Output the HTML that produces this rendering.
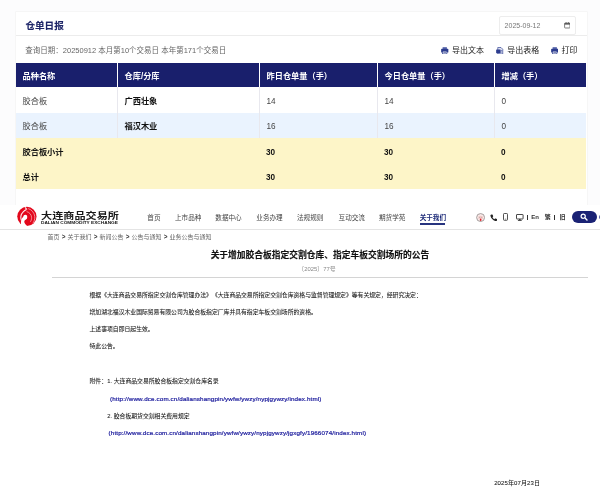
<!DOCTYPE html>
<html lang="zh-CN">
<head>
<meta charset="utf-8">
<title>仓单日报</title>
<style>
html,body{margin:0;padding:0;}
body{width:600px;height:500px;overflow:hidden;background:#fff;position:relative;font-family:"Liberation Sans","Noto Sans CJK SC",sans-serif;color:#333;text-spacing-trim:space-all;}
#wrap{position:absolute;left:0;top:0;width:600px;height:500px;will-change:transform;opacity:0.999;}
.abs{position:absolute;white-space:nowrap;line-height:1;}
#top{position:absolute;left:0;top:0;width:600px;height:205px;background:#fcfcfd;}
#panel{position:absolute;left:16px;top:12px;width:571px;height:193px;background:#fff;box-shadow:0 0 0 0.6px #f2f2f2;}
#ttl{left:25.4px;top:20.6px;font-size:9.6px;-webkit-text-stroke:0.12px #1d2568;font-weight:bold;color:#1d2568;}
#hr1{position:absolute;left:16px;top:35.4px;width:571px;height:1px;background:#ececec;}
#q{left:25.3px;top:46.6px;font-size:7.5px;color:#666;}
#date{position:absolute;left:499.2px;top:16.2px;width:76.6px;height:18.4px;border:1px solid #ededed;border-radius:2px;box-sizing:border-box;background:#fff;}
#datet{left:504.6px;top:21.9px;font-size:7px;color:#777;}
.tool{font-size:8px;color:#222;top:46.6px;}
table{position:absolute;left:16px;top:63.25px;width:570.4px;border-collapse:collapse;table-layout:fixed;font-size:8.2px;}
td,th{vertical-align:top;padding:8px 0 0 6.5px;text-align:left;box-sizing:border-box;border-left:1px solid #e8e8ee;font-weight:normal;color:#444;line-height:10px;}
th{background:#191f6c;color:#fff;font-weight:bold;height:24px;border-left:1px solid #fff;padding-top:8.25px;}
th:first-child,td:first-child{border-left:none;}
tr.r1 td{height:25.85px;padding-top:9.35px;}
tr.r2 td{background:#eaf3fe;height:25.2px;padding-top:9.1px;}
tr.s td{background:#fdf5c8;font-weight:bold;color:#111;border-left:none;height:25.45px;padding-top:9.7px;}
tr.t td{padding-top:9.5px;}
td.b{font-weight:bold;color:#111;}

#bot{position:absolute;left:0;top:205px;width:600px;height:295px;background:#fff;}
#nl{position:absolute;left:0;top:228.5px;width:600px;height:1px;background:#e4e4e4;}
.nav{font-size:6.6px;color:#444;top:214.6px;}
#nav8{font-weight:bold;color:#1c2a78;}
#nu{position:absolute;left:419.8px;top:223px;width:25.6px;height:1.5px;background:#27347f;}
#lg1{left:40.6px;top:211.7px;font-size:8.6px;font-weight:700;color:#1a1a1a;transform-origin:0 0;transform:scaleX(1.295);letter-spacing:0;}
#lg2{left:40.8px;top:221.5px;font-size:3.4px;font-weight:bold;color:#111;letter-spacing:0;transform-origin:0 0;transform:scaleX(1.4);}
#bc{left:47.5px;top:234.3px;font-size:6px;color:#666;}
#bc b{color:#333;font-weight:bold;display:inline-block;width:8px;text-align:center;font-size:6.4px;}
#h1{left:0;width:640px;text-align:center;top:251.4px;font-size:8.75px;font-weight:bold;color:#111;-webkit-text-stroke:0.15px #111;}
#no{left:0;width:634px;text-align:center;top:267.4px;font-size:5.9px;color:#888;}
#hr2{position:absolute;left:51.6px;top:276.9px;width:536.4px;height:1px;background:#d4d4d4;}
.p{font-size:5.84px;color:#151515;left:89.5px;-webkit-text-stroke:0.06px #151515;}
.u{color:#2424a0 !important;font-size:6.25px;letter-spacing:0.13px;-webkit-text-stroke:0.22px #2424a0;}
.rt{font-size:6.2px;color:#333;top:213.8px;font-weight:bold;}
</style>
</head>
<body>
<div id="wrap">
<div id="top">
  <div id="panel"></div>
  <div id="ttl" class="abs">仓单日报</div>
  <div id="hr1"></div>
  <div id="q" class="abs">查询日期：20250912 本月第10个交易日 本年第171个交易日</div>
  <div id="date"></div>
  <div id="datet" class="abs">2025-09-12</div>
  <svg class="abs" style="left:563.7px;top:22.4px" width="6.6" height="6.6" viewBox="0 0 13.2 13.2"><rect x="1.2" y="2.2" width="10.8" height="9.8" rx="1.2" fill="#fff" stroke="#555" stroke-width="1.5"/><rect x="1.2" y="2.2" width="10.8" height="3" fill="#555"/><rect x="3.4" y="0.4" width="1.5" height="2.6" fill="#555"/><rect x="8.3" y="0.4" width="1.5" height="2.6" fill="#555"/></svg>
  <svg class="abs" style="left:441px;top:47.2px" width="7.5" height="7" viewBox="0 0 15 14"><rect x="3.2" y="0.3" width="8.6" height="4.2" fill="#5a68ad"/><rect x="0.3" y="3.6" width="14.4" height="7.6" rx="1.4" fill="#2c3c8e"/><rect x="3.2" y="8.4" width="8.6" height="5.3" fill="#fff" stroke="#2c3c8e" stroke-width="1.2"/><rect x="4.6" y="10.4" width="5.8" height="1.2" fill="#2c3c8e"/></svg>
  <svg class="abs" style="left:496px;top:46.9px" width="7.5" height="7.5" viewBox="0 0 15 15"><path d="M3.5,1 H10 L13.5,4.5 V14 H3.5 Z" fill="#dfe3f3" stroke="#2c3c8e" stroke-width="1.3"/><rect x="0.3" y="5" width="9" height="7.4" rx="0.8" fill="#2c3c8e"/><rect x="10.2" y="6.6" width="2.2" height="1.2" fill="#2c3c8e"/><rect x="10.2" y="9.4" width="2.2" height="1.2" fill="#2c3c8e"/></svg>
  <svg class="abs" style="left:550.6px;top:47.2px" width="7.5" height="7" viewBox="0 0 15 14"><rect x="3.2" y="0.3" width="8.6" height="4.2" fill="#5a68ad"/><rect x="0.3" y="3.6" width="14.4" height="7.6" rx="1.4" fill="#2c3c8e"/><rect x="3.2" y="8.4" width="8.6" height="5.3" fill="#fff" stroke="#2c3c8e" stroke-width="1.2"/><rect x="4.6" y="10.4" width="5.8" height="1.2" fill="#2c3c8e"/></svg>
  <div class="abs tool" style="left:452px">导出文本</div>
  <div class="abs tool" style="left:507.3px">导出表格</div>
  <div class="abs tool" style="left:561.5px">打印</div>
  <table>
    <colgroup><col style="width:101.5px"><col style="width:142px"><col style="width:118px"><col style="width:117px"><col></colgroup>
    <tr><th>品种名称</th><th>仓库/分库</th><th>昨日仓单量（手）</th><th>今日仓单量（手）</th><th>增减（手）</th></tr>
    <tr class="r1"><td>胶合板</td><td class="b">广西壮象</td><td>14</td><td>14</td><td>0</td></tr>
    <tr class="r2"><td>胶合板</td><td class="b">福汉木业</td><td>16</td><td>16</td><td>0</td></tr>
    <tr class="s"><td>胶合板小计</td><td></td><td>30</td><td>30</td><td>0</td></tr>
    <tr class="s t"><td>总计</td><td></td><td>30</td><td>30</td><td>0</td></tr>
  </table>
</div>

<div id="bot"></div>
<svg class="abs" style="left:14px;top:204px" width="26" height="26" viewBox="0 0 26 26">
  <circle cx="12.9" cy="12.45" r="9.65" fill="#e3081c"/>
  <ellipse cx="11.3" cy="13.1" rx="2" ry="2.3" fill="#fff"/>
  <path d="M10,12.2 C8.2,13.4 7.1,15 6.9,18.2 C6.8,20 7.1,21.6 7.8,23.4 L15.6,23.4 C13.4,22.4 10.8,20.2 10.3,18.2 C10.1,16.8 11,15.8 13,14.8 Z" fill="#fff"/>
  <path d="M7.3,16.4 C6.3,13.4 6.9,10.2 9.2,7.8 C10.2,6.8 11.3,6.1 12.6,5.5" fill="none" stroke="#fff" stroke-width="1.1" stroke-opacity="0.9"/>
  <path d="M12.6,7.6 C15.4,8.2 17.4,10.6 17.6,13.4 C17.7,15 17.2,16.6 16.4,17.8" fill="none" stroke="#fff" stroke-width="0.75" stroke-opacity="0.7"/>
  <path d="M14.2,4.6 C17.6,5.6 20.4,8.8 20.8,12.6 C21,15 20.2,17.4 18.8,19.4" fill="none" stroke="#fff" stroke-width="0.75" stroke-opacity="0.7"/>
  <path d="M10.8,2.2 L13.6,5.2 L11.4,5.6 Z" fill="#fff" fill-opacity="0.8"/>
</svg>
<div id="lg1" class="abs">大连商品交易所</div>
<div id="lg2" class="abs">DALIAN COMMODITY EXCHANGE</div>
<div class="abs nav" style="left:147.3px">首页</div>
<div class="abs nav" style="left:175px">上市品种</div>
<div class="abs nav" style="left:215.3px">数据中心</div>
<div class="abs nav" style="left:256.3px">业务办理</div>
<div class="abs nav" style="left:297px">法规规则</div>
<div class="abs nav" style="left:338.6px">互动交流</div>
<div class="abs nav" style="left:379px">期货学苑</div>
<div class="abs nav" id="nav8" style="left:419.7px">关于我们</div>
<div id="nu"></div>
<svg class="abs" style="left:475.8px;top:212.9px" width="9.2" height="9.2" viewBox="0 0 19.2 19.2"><circle cx="9.6" cy="9.5" r="8.3" fill="#f9e9e8" stroke="#938c8c" stroke-width="1.7"/><path d="M4.6,8 Q9.6,4 14.6,8 L14,12.5 Q9.6,10 5.2,12.5 Z" fill="#efc9c6"/><ellipse cx="9.7" cy="14.2" rx="1.7" ry="2.7" fill="#e0202c"/><circle cx="7" cy="9.4" r="0.8" fill="#9a9090"/><circle cx="12.2" cy="9.4" r="0.8" fill="#9a9090"/></svg>
<svg class="abs" style="left:489.8px;top:213.7px" width="7.6" height="7.6" viewBox="0 0 16 16"><path d="M3.2,1 C4,0.6 5,0.8 5.4,1.6 L6.6,4 C6.9,4.7 6.7,5.4 6.1,5.9 L5.2,6.6 C6.1,8.5 7.5,9.9 9.4,10.8 L10.1,9.9 C10.6,9.3 11.3,9.1 12,9.4 L14.4,10.6 C15.2,11 15.4,12 15,12.8 L14.3,14 C13.8,14.9 12.8,15.3 11.8,15 C6.5,13.6 2.4,9.5 1,4.2 C0.7,3.2 1.1,2.2 2,1.7 Z" fill="#222"/></svg>
<svg class="abs" style="left:503.2px;top:213.4px" width="5" height="7.8" viewBox="0 0 10 15.6"><rect x="1" y="1" width="8" height="13.6" rx="1.6" fill="#fff" stroke="#333" stroke-width="1.7"/><rect x="3.6" y="11.6" width="2.8" height="1" fill="#333"/></svg>
<svg class="abs" style="left:516.2px;top:213.8px" width="7.6" height="7.2" viewBox="0 0 15.2 14.4"><rect x="1" y="1" width="13.2" height="9" rx="0.8" fill="#fff" stroke="#333" stroke-width="1.8"/><rect x="6.2" y="10" width="2.8" height="2.4" fill="#333"/><rect x="3.8" y="12" width="7.6" height="1.7" fill="#333"/></svg>
<div class="abs" style="left:526.9px;top:214.6px;width:0.9px;height:5.6px;background:#333"></div>
<div class="abs rt" style="left:531.2px;font-size:6px;top:214.1px">En</div>
<div class="abs rt" style="left:544.8px;font-size:6px;top:214.1px">繁</div>
<div class="abs" style="left:554.3px;top:214.6px;width:0.9px;height:5.6px;background:#333"></div>
<div class="abs rt" style="left:559.4px;font-size:6px;top:214.1px">旧</div>
<div class="abs" style="left:571.6px;top:211.4px;width:25.4px;height:11.6px;border-radius:6px;background:#1a2274;"></div>
<svg class="abs" style="left:580.4px;top:213.2px" width="8" height="8" viewBox="0 0 16 16"><circle cx="6.4" cy="6.4" r="4.2" fill="none" stroke="#fff" stroke-width="2.4"/><line x1="9.6" y1="9.6" x2="14" y2="14" stroke="#fff" stroke-width="2.8" stroke-linecap="round"/></svg>
<div class="abs" style="left:598.8px;top:215.2px;width:3px;height:4px;border-radius:1.5px;background:#5f69a6;"></div>
<div id="nl"></div>
<div id="bc" class="abs">首页<b>&gt;</b>关于我们<b>&gt;</b>新闻公告<b>&gt;</b>公告与通知<b>&gt;</b>业务公告与通知</div>
<div id="h1" class="abs">关于增加胶合板指定交割仓库、指定车板交割场所的公告</div>
<div id="no" class="abs">〔2025〕77号</div>
<div id="hr2"></div>
<div class="abs p" style="top:292.9px">根据《大连商品交易所指定交割仓库管理办法》《大连商品交易所指定交割仓库资格与监督管理规定》等有关规定，经研究决定：</div>
<div class="abs p" style="top:310.2px">增加湖北福汉木业国际贸易有限公司为胶合板指定厂库并具有指定车板交割场所的资格。</div>
<div class="abs p" style="top:326.5px">上述事项自即日起生效。</div>
<div class="abs p" style="top:343.8px">特此公告。</div>
<div class="abs p" style="top:379.4px">附件：</div>
<div class="abs p" style="top:379.4px;left:107.3px">1. 大连商品交易所胶合板指定交割仓库名录</div>
<div class="abs p u" style="top:395.6px;left:110px">(http://www.dce.com.cn/dalianshangpin/ywfw/ywzy/nypjgywzy/index.html)</div>
<div class="abs p" style="top:414px;left:107.3px">2. 胶合板期货交割相关费用规定</div>
<div class="abs p u" style="top:430.2px;left:108.6px">(http://www.dce.com.cn/dalianshangpin/ywfw/ywzy/nypjgywzy/jgxgfy/1966074/index.html)</div>
<div class="abs p" style="top:479.8px;left:494.2px;font-size:6px;color:#111;letter-spacing:0.1px">2025年07月23日</div>
</div>
</body>
</html>
